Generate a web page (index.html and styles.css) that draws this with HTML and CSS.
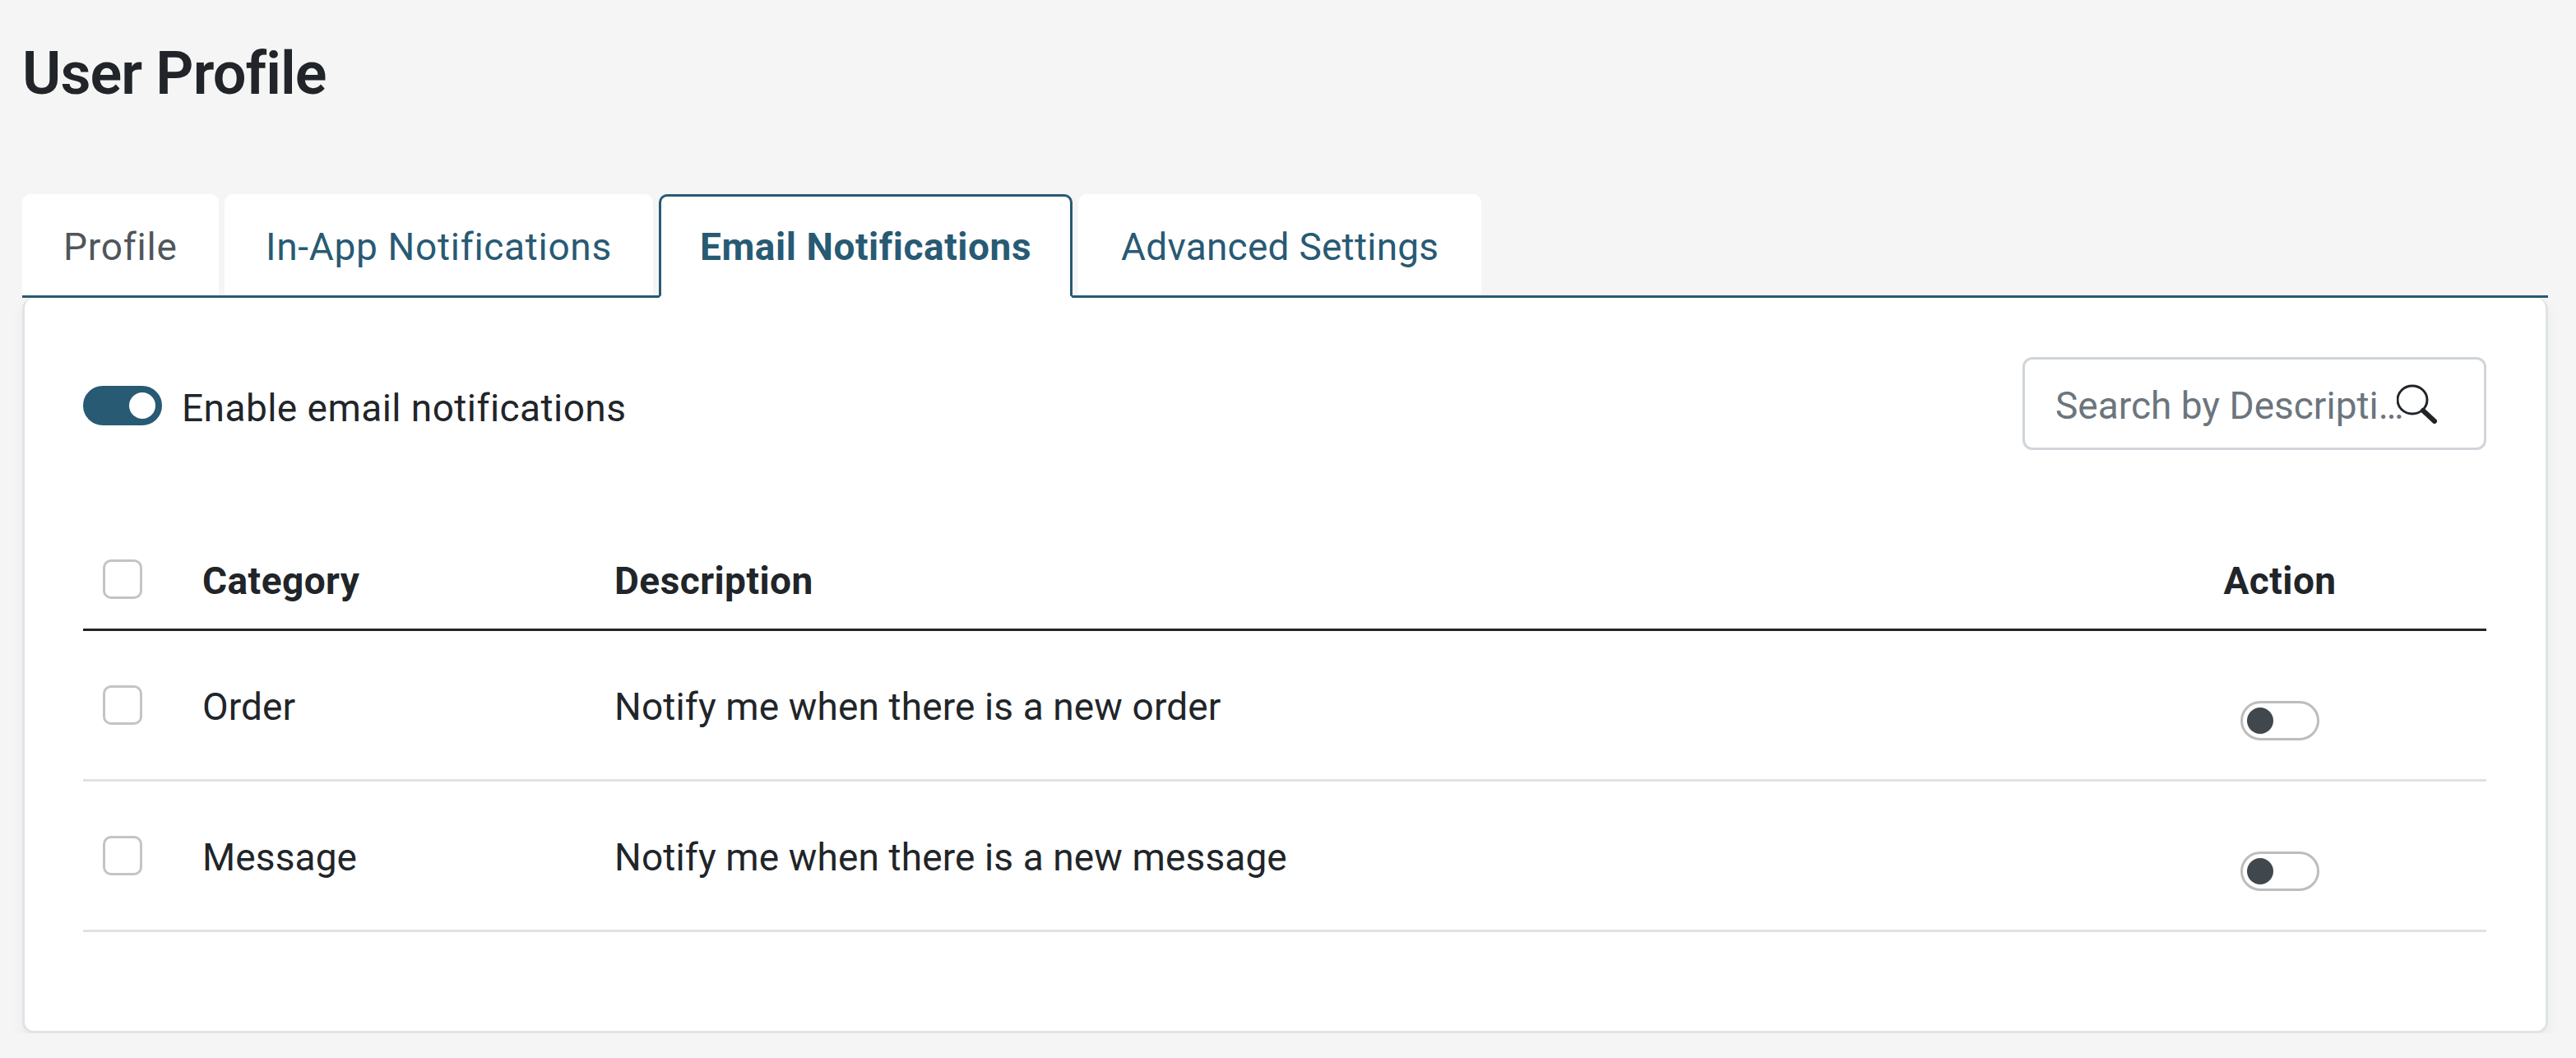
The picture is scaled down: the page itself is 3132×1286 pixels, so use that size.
FILE: index.html
```html
<!DOCTYPE html>
<html lang="en">
<head>
  <meta charset="UTF-8" />
  <title>User Profile</title>
  <link rel="stylesheet" href="styles.css">
</head>
<body>
  <div class="container">
    <h1>User Profile</h1>

    <div class="tabs">
      <a class="tab tab-profile">Profile</a>
      <a class="tab tab-inapp">In-App Notifications</a>
      <a class="tab tab-email active">Email Notifications</a>
      <a class="tab tab-advanced">Advanced Settings</a>
    </div>

    <div class="card">
      <div class="toolbar">
        <label class="enable">
          <span class="switch on"></span>
          <span class="enable-text">Enable email notifications</span>
        </label>
        <div class="search">
          <input type="text" placeholder="Search by Description" />
          <svg class="search-icon" viewBox="0 0 50 48" fill="none" stroke="#212529">
            <ellipse cx="19" cy="19" rx="18" ry="17" stroke-width="3" />
            <path d="M32 32 L46 45" stroke-width="6" stroke-linecap="round" />
          </svg>
        </div>
      </div>

      <table>
        <thead>
          <tr>
            <th class="col-check"><input type="checkbox" /></th>
            <th class="col-category">Category</th>
            <th>Description</th>
            <th class="col-action">Action</th>
          </tr>
        </thead>
        <tbody>
          <tr>
            <td class="col-check"><input type="checkbox" /></td>
            <td>Order</td>
            <td>Notify me when there is a new order</td>
            <td class="col-action"><span class="switch"></span></td>
          </tr>
          <tr>
            <td class="col-check"><input type="checkbox" /></td>
            <td>Message</td>
            <td>Notify me when there is a new message</td>
            <td class="col-action"><span class="switch"></span></td>
          </tr>
        </tbody>
      </table>
    </div>
  </div>
</body>
</html>
```

FILE: styles.css
```css
body {
  margin: 0;
  background-color: #f5f5f5;
  font-family: 'Roboto', 'Liberation Sans', sans-serif;
  color: #212529;
}

.container {
  padding: 0 34px 0 27px;
}

h1 {
  margin: 0;
  padding-top: 48px;
  height: 236px;
  box-sizing: border-box;
  font-size: 72px;
  line-height: 84px;
  font-weight: 600;
  letter-spacing: -0.9px;
}

/* tabs */
.tabs {
  display: flex;
  gap: 7px;
  height: 126px;
  box-sizing: border-box;
  border-bottom: 3px solid #285a74;
}

.tab {
  height: 126px;
  box-sizing: border-box;
  padding-left: 50px;
  background-color: #fff;
  border-radius: 10px 10px 0 0;
  border-bottom: 3px solid #285a74;
  color: #285a74;
  font-size: 46px;
  line-height: 129px;
  white-space: nowrap;
}

.tab-profile {
  width: 239px;
  color: #50565b;
  letter-spacing: 0.8px;
}

.tab-inapp {
  width: 521px;
  letter-spacing: 0.7px;
}

.tab-email {
  width: 503px;
  letter-spacing: 0.55px;
}

.tab-advanced {
  width: 490px;
  padding-left: 52px;
  letter-spacing: 0.25px;
}

.tab.active {
  border: 3px solid #285a74;
  border-bottom: 3px solid #fff;
  font-weight: 700;
  line-height: 123px;
  padding-left: 47px;
}

/* card */
.card {
  box-sizing: border-box;
  height: 894px;
  padding: 72px 72px 0 71px;
  background-color: #fff;
  border: 3px solid #e0e3e7;
  border-top: none;
  border-radius: 14px;
  box-shadow: 0 8px 16px rgba(0, 0, 0, 0.05);
}

.toolbar {
  display: flex;
  justify-content: space-between;
  height: 113px;
}

.enable {
  display: flex;
  align-items: center;
  gap: 24px;
  height: 118px;
  font-size: 46px;
  letter-spacing: 0.45px;
}

.enable-text {
  padding-top: 5px;
}

.search {
  position: relative;
  width: 564px;
  height: 113px;
}

.search input {
  box-sizing: border-box;
  width: 100%;
  height: 100%;
  padding: 5px 86px 0 37px;
  border: 3px solid #d0d5da;
  border-radius: 12px;
  outline: none;
  font-family: inherit;
  font-size: 46px;
  letter-spacing: 0;
  text-overflow: ellipsis;
}

.search input::placeholder {
  color: #6c757d;
  opacity: 1;
}

.search-icon {
  position: absolute;
  top: 33px;
  left: 455px;
  width: 50px;
  height: 48px;
}

/* table */
table {
  width: 100%;
  margin-top: 100px;
  border-collapse: collapse;
  table-layout: fixed;
  font-size: 46px;
  letter-spacing: 0.12px;
}

th {
  height: 117px;
  padding: 0;
  text-align: left;
  font-weight: 700;
  border-bottom: 3px solid #212529;
  letter-spacing: 0.45px;
}

td {
  height: 183px;
  padding: 4px 0 0;
  box-sizing: border-box;
  border-bottom: 3px solid #dee2e6;
}

.col-check {
  width: 145px;
  padding-left: 24px;
  box-sizing: border-box;
}

td.col-check {
  padding-top: 0;
}

th.col-check input {
  margin-top: -3px;
}

th:nth-child(2) {
  width: 501px;
}

.col-action {
  width: 502px;
  text-align: center;
}

td.col-action {
  padding: 32px 0 0;
}

input[type="checkbox"] {
  appearance: none;
  display: block;
  width: 48px;
  height: 48px;
  margin: 0;
  background-color: #fff;
  border: 3px solid #c4c4c4;
  border-radius: 10px;
}

/* switches */
.switch {
  display: inline-block;
  position: relative;
  vertical-align: middle;
  width: 96px;
  height: 48px;
  box-sizing: border-box;
  border: 3px solid #bdbdbd;
  border-radius: 24px;
  background-color: #fff;
}

.switch::after {
  content: '';
  position: absolute;
  top: 5px;
  left: 5px;
  width: 32px;
  height: 32px;
  border-radius: 50%;
  background-color: #40484e;
}

.switch.on {
  border-color: #285a74;
  background-color: #285a74;
}

.switch.on::after {
  left: auto;
  right: 5px;
  background-color: #fff;
}
```
